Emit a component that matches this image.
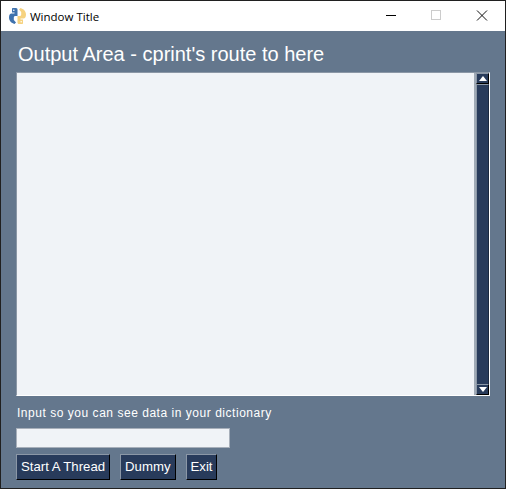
<div class="win">
  <div class="titlebar">
    <svg class="logo" width="17" height="16" viewBox="0 0 17 16">
      <path d="M3.500 0H7c1 0 1.500.8 1.500 1.800V8H6C5 8 4.800 9 4.800 10v2L7 14.500 5.500 16C2.500 15 0 13 0 9.500 0 7 1 5.500 2.500 5.500H5.500V4.500H3V1.500C3 .8 3 .3 3.500 0z" fill="#3f72ad"/>
      <circle cx="4.800" cy="2.300" r=".8" fill="#fff"/>
      <path transform="rotate(180 8.500 8)" d="M3.500 0H7c1 0 1.500.8 1.500 1.800V8H6C5 8 4.800 9 4.800 10v2L7 14.500 5.500 16C2.500 15 0 13 0 9.500 0 7 1 5.500 2.500 5.500H5.500V4.500H3V1.500C3 .8 3 .3 3.500 0z" fill="#f6d27f"/>
      <circle cx="12.200" cy="13.700" r=".8" fill="#fff"/>
    </svg>
    <span class="title">Window Title</span>
    <div class="controls">
      <svg width="136" height="30" viewBox="0 0 136 30">
        <path d="M16 14.500h10" stroke="#000" fill="none"/>
        <rect x="61.500" y="9.500" width="9" height="9" stroke="#ccc" fill="none"/>
        <path d="M107 9.500l10 10M117 9.500l-10 10" stroke="#111" fill="none"/>
      </svg>
    </div>
  </div>
  <div class="body">
    <div class="heading">Output Area - cprint's route to here</div>
    <div class="output">
      <div class="area"></div>
      <div class="scroll">
        <div class="arrow"><svg width="8" height="5" viewBox="0 0 8 5"><path d="M4 0L8 5H0z" fill="#fff"/></svg></div>
        <div class="track"></div>
        <div class="arrow"><svg width="8" height="5" viewBox="0 0 8 5"><path d="M0 0h8L4 5z" fill="#fff"/></svg></div>
      </div>
    </div>
    <div class="label">Input so you can see data in your dictionary</div>
    <div class="input"></div>
    <div class="buttons">
      <div class="btn">Start A Thread</div>
      <div class="btn">Dummy</div>
      <div class="btn">Exit</div>
    </div>
  </div>
</div>

<style>
  :global(body) { margin: 0; background: #64778d; }
  .win {
    width: 506px; height: 489px; box-sizing: border-box;
    border: 1px solid #202020;
    display: flex; flex-direction: column;
    font-family: "Liberation Sans", Arial, sans-serif;
  }
  .titlebar {
    height: 30px; background: #fff; display: flex; align-items: center;
    flex: none;
  }
  .logo { margin-left: 8px; }
  .title { margin-left: 4px; font: 11.500px "Open Sans", "Noto Sans", sans-serif; color: #000; }
  .controls { margin-left: auto; height: 30px; margin-right: -1px; }
  .body { flex: 1; background: #64778d; padding: 0 15px; display: flex; flex-direction: column; }
  .heading { margin: 11px 0 0 2px; font-size: 20px; line-height: 24px; color: #fff; height: 30px; }
  .output { display: flex; height: 324px; width: 474px; box-sizing: border-box; border: 1px solid #8b97a6; border-right-color: #fff; border-bottom-color: #fff; }
  .area { flex: 1; background: #f0f3f7; }
  .scroll { width: 15px; background: #283b5b; display: flex; flex-direction: column; border-left: 2px solid #a0aab6; box-sizing: border-box; }
  .arrow { height: 11px; box-sizing: border-box; background: #283b5b; display: flex; align-items: center; justify-content: center; border: 1px solid; border-color: #8b97a6 #000 #000 #8b97a6; flex: none; }
  .track { flex: 1; background: #283b5b; border-left: 1px solid #8b97a6; border-top: 1px solid #8b97a6; border-right: 1px solid #1b2940; }
  .label { margin-top: 10px; font-size: 12px; line-height: 15px; color: #fff; margin-left: 1px; letter-spacing: 0.530px; }
  .input { margin-top: 7px; width: 214px; height: 20px; box-sizing: border-box; background: #f0f3f7; border: 1px solid #a7afba; }
  .buttons { display: flex; margin-top: 6px; gap: 10px; }
  .btn {
    background: #283b5b; color: #fff; font-size: 13.200px; line-height: 24px; height: 26px; box-sizing: border-box;
    padding: 0 4px; border: 1px solid; border-color: #8b97a6 #000 #000 #8b97a6;
  }
</style>
